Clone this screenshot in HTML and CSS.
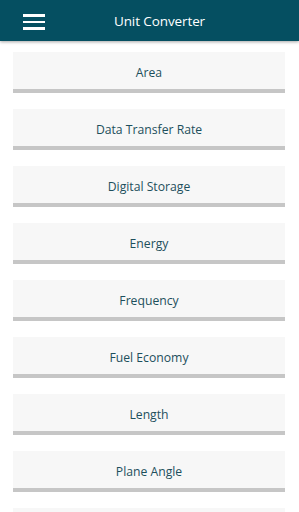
FILE: index.html
```html
<!DOCTYPE html>
<html>
<head>
<meta charset="utf-8">
<link rel="stylesheet" href="styles.css">
</head>
<body>
<header class="appbar">
  <div class="menu" aria-label="menu">
    <span class="bar"></span><span class="bar"></span><span class="bar"></span>
  </div>
  <div class="title">Unit Converter</div>
</header>
<main class="list">
  <div class="card">Area</div>
  <div class="card">Data Transfer Rate</div>
  <div class="card">Digital Storage</div>
  <div class="card">Energy</div>
  <div class="card">Frequency</div>
  <div class="card">Fuel Economy</div>
  <div class="card">Length</div>
  <div class="card">Plane Angle</div>
  <div class="card"></div>
</main>
</body>
</html>
```
FILE: styles.css
```css
html, body {
  margin: 0;
  padding: 0;
  background: #ffffff;
  height: 512px;
  overflow: hidden;
  font-family: "Open Sans", "Noto Sans", sans-serif;
}
.appbar {
  height: 41px;
  background: #054f61;
  display: flex;
  align-items: center;
  position: relative;
  box-shadow: 0 1px 3px rgba(0,0,0,0.35);
}
.menu {
  position: absolute;
  left: 23px;
  top: 14px;
  width: 22px;
  display: flex;
  flex-direction: column;
  gap: 4px;
}
.bar {
  display: block;
  height: 2.6px;
  background: #ffffff;
}
.title {
  flex: 1;
  text-align: center;
  color: #ffffff;
  font-size: 13.5px;
  letter-spacing: -0.1px;
  padding-left: 20px;
}
.list {
  padding: 11px 14px 0 13px;
  display: flex;
  flex-direction: column;
  gap: 16px;
}
.card {
  flex: none;
  box-sizing: border-box;
  height: 41px;
  background: #f7f7f7;
  border-bottom: 4px solid #c6c6c6;
  display: flex;
  align-items: center;
  justify-content: center;
  color: #1d4f5c;
  font-size: 12.2px;
  padding-top: 3px;
}
```
